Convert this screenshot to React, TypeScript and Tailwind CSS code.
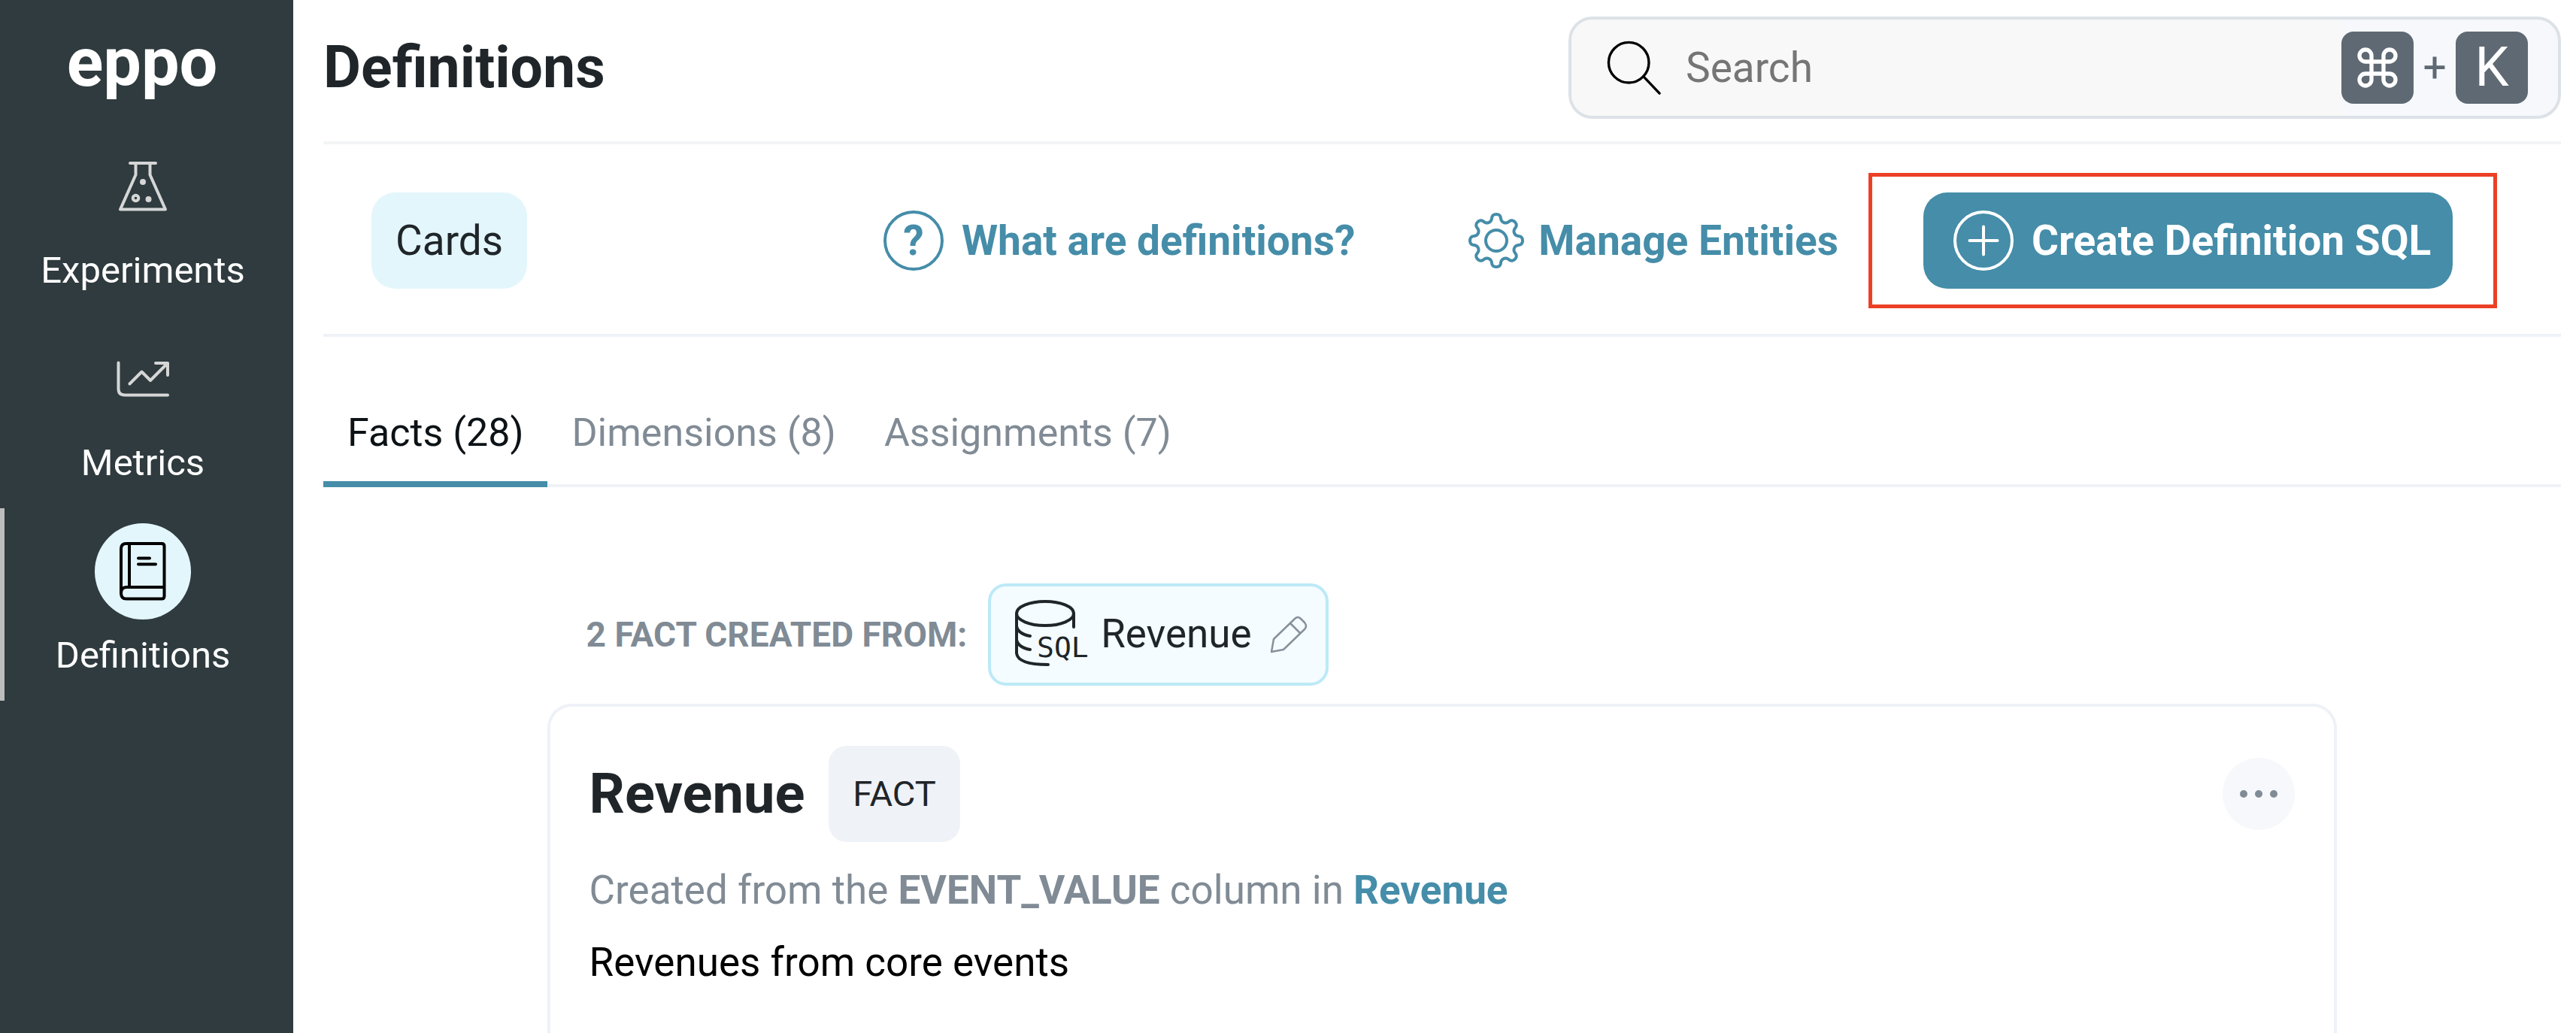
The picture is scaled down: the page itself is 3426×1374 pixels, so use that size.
import type { ReactNode } from "react";
import { Command } from "lucide-react";

function FlaskIcon() {
  return (
    <svg width="68" height="68" viewBox="0 0 68 68" fill="none" stroke="#d6d6d6" strokeWidth="4" strokeLinecap="round" strokeLinejoin="round" aria-hidden="true">
      <path d="M17 3H51M24.500 4V18.500L4 64.500H64L43.500 18.500V4" />
      <circle cx="24.500" cy="49.500" r="3.800" />
      <circle cx="34" cy="28" r="4" fill="#d6d6d6" stroke="none" />
      <circle cx="41.500" cy="51" r="4" fill="#d6d6d6" stroke="none" />
    </svg>
  );
}

function TrendIcon() {
  return (
    <svg width="72" height="48" viewBox="0 0 72 48" fill="none" stroke="#d6d6d6" strokeWidth="4" strokeLinecap="round" strokeLinejoin="round" aria-hidden="true">
      <path d="M3.500 2.500V37Q3.500 45.500 12 45.500H69" />
      <path d="M18.500 30.500L34.500 14.500L46 26L69 3M53 3H69V19" />
    </svg>
  );
}

function BookIcon() {
  return (
    <svg width="64" height="80" viewBox="0 0 64 80" fill="none" stroke="#000" strokeWidth="4" strokeLinecap="round" strokeLinejoin="round" aria-hidden="true">
      <path d="M3 69V10Q3 3 10 3H57Q60.500 3 60.500 6.500V73Q60.500 76.500 57 76.500H10Q3 76.500 3 69Q3 61 10 61H60" />
      <path d="M14 3V61M26 22.500H41M26 30.500H49" />
    </svg>
  );
}

function SearchIcon() {
  return (
    <svg className="shrink-0" width="74" height="74" viewBox="0 0 76 76" fill="none" stroke="#000" strokeWidth="3.500" strokeLinecap="round" aria-hidden="true">
      <circle cx="31" cy="31" r="27.500" />
      <path d="M51 50L73 73" />
    </svg>
  );
}

/* Eight rounded teeth: the radius follows a cosine, and the angle is eased so tips and valleys stay broad. */
function GearIcon() {
  const steps = Array.from({ length: 240 }, (_, i) => {
    const t = (i / 240) * Math.PI * 2;
    const a = t + 0.035 * Math.sin(16 * t);
    const r = 30.5 + 4.5 * Math.cos(8 * t);
    return `${(40 + r * Math.sin(a)).toFixed(2)} ${(40 - r * Math.cos(a)).toFixed(2)}`;
  });
  return (
    <svg className="shrink-0" width="80" height="80" viewBox="0 0 80 80" fill="none" stroke="#458da9" strokeWidth="4" strokeLinejoin="round" aria-hidden="true">
      <path d={`M${steps.join("L")}Z`} />
      <circle cx="40" cy="40" r="14" />
    </svg>
  );
}

function PlusCircleIcon() {
  return (
    <svg className="shrink-0" width="80" height="80" viewBox="0 0 80 80" fill="none" stroke="#fff" strokeWidth="4" strokeLinecap="round" aria-hidden="true">
      <circle cx="40" cy="40" r="38" />
      <path d="M40 21.500V58.500M21.500 40H58.500" />
    </svg>
  );
}

function SqlIcon() {
  return (
    <svg className="shrink-0" width="98" height="92" viewBox="0 0 98 92" fill="none" stroke="#1f2529" strokeWidth="4" strokeLinecap="round" aria-hidden="true">
      <ellipse cx="40" cy="18" rx="38" ry="16" />
      <path d="M2 18V71Q4 86 44 86M78 18V36M2 35Q4 45 20 48M2 53Q4 63 20 66" />
      <text x="29" y="76" fontSize="38" fontFamily="DejaVu Sans Mono" fill="#1f2529" stroke="none">SQL</text>
    </svg>
  );
}

function PencilIcon() {
  return (
    <svg className="shrink-0" width="50" height="50" viewBox="0 0 50 50" fill="none" stroke="#87919b" strokeWidth="2.500" strokeLinejoin="round" aria-hidden="true">
      <path d="M2 48L5 31L33 4Q37 0 41 4L46 9Q50 14 46 18L18 45ZM27 10L40 23" />
    </svg>
  );
}

function NavItem({ label, icon, active }: { label: string; icon: ReactNode; active?: boolean }) {
  return (
    <a
      href="#"
      aria-current={active ? "page" : undefined}
      className={`flex h-64 flex-col items-center border-l-6 pt-5 pr-5 pl-1 text-white ${active ? "border-[#bdbdbd]" : "border-transparent"}`}
    >
      <span className={`flex size-32 items-center justify-center rounded-full ${active ? "bg-[#e3f6fc]" : ""}`}>{icon}</span>
      <span className="mt-4 text-[49px] leading-16">{label}</span>
    </a>
  );
}

function Tab({ label, active }: { label: string; active?: boolean }) {
  return (
    <button
      type="button"
      role="tab"
      aria-selected={!!active}
      className={`-mb-1 border-b-8 px-8 pt-8 pb-7 text-[52px] leading-18 ${active ? "border-[#458da9] text-[#0c1216]" : "border-transparent text-[#808b95]"}`}
    >
      {label}
    </button>
  );
}

function Key({ children }: { children: ReactNode }) {
  return (
    <kbd className="flex size-24 items-center justify-center rounded-2xl bg-[#5e6973] font-['Roboto',sans-serif] text-[72px] leading-none text-white">
      {children}
    </kbd>
  );
}

export default function App() {
  return (
    <div className="flex h-screen overflow-hidden bg-white font-['Roboto',sans-serif] text-[#1f2529]">
      <aside className="w-[390px] shrink-0 bg-[#2f3b3e]">
        <div className="flex h-41 justify-center pt-9 pr-3 text-[90px] leading-24 font-bold text-white">eppo</div>
        <nav>
          <NavItem label="Experiments" icon={<FlaskIcon />} />
          <NavItem label="Metrics" icon={<TrendIcon />} />
          <NavItem label="Definitions" icon={<BookIcon />} active />
        </nav>
      </aside>

      <main className="flex min-w-0 flex-1 flex-col pr-5 pl-10">
        <header className="flex h-48 shrink-0 items-center justify-between border-b-4 border-[#f3f4f5] pb-2">
          <h1 className="text-[77px] leading-24 font-bold">Definitions</h1>
          <div className="flex h-34 w-[1320px] items-center overflow-hidden rounded-[32px] border-4 border-[#dce2e7] bg-[#f6f8fb]">
            <label className="flex h-full flex-1 items-center gap-8 bg-[#f8f8f8] pl-[46px]">
              <SearchIcon />
              <input type="search" aria-label="Search" placeholder="Search" className="min-w-0 flex-1 bg-transparent text-[55px] leading-18 outline-none placeholder:text-[#757575]" />
            </label>
            <div className="flex items-center pr-10">
              <Key><Command size={64} strokeWidth={2} /></Key>
              <span className="w-14 text-center text-[55px] leading-none text-[#5e6973]">+</span>
              <Key>K</Key>
            </div>
          </div>
        </header>

        <div className="flex h-64 shrink-0 items-center border-b-4 border-[#eef2f7] pt-1 pr-[85px] pl-16">
          <button type="button" className="h-32 rounded-[32px] bg-[#e3f6fc] px-8 text-[55px]">Cards</button>
          <div className="ml-auto flex items-center text-[55px] font-bold text-[#458da9]">
            <a href="#" className="flex items-center gap-6">
              <span className="flex size-20 items-center justify-center rounded-full border-4 border-[#458da9] leading-none">?</span>
              What are definitions?
            </a>
            <a href="#" className="ml-[148px] flex items-center gap-4">
              <GearIcon />
              Manage Entities
            </a>
            <div className="ml-10 flex h-[180px] items-center border-5 border-[#ec4026] pr-[54px] pl-[68px]">
              <button type="button" className="flex h-32 w-[704px] items-center gap-6 rounded-[32px] bg-[#458da9] pl-10 whitespace-nowrap text-white">
                <PlusCircleIcon />
                Create Definition SQL
              </button>
            </div>
          </div>
        </div>

        <div role="tablist" className="flex h-50 shrink-0 items-end border-b-4 border-[#eef2f7]">
          <Tab label="Facts (28)" active />
          <Tab label="Dimensions (8)" />
          <Tab label="Assignments (7)" />
        </div>

        <section className="mx-auto flex w-4/5 flex-1 flex-col pt-32">
          <div className="flex items-center gap-7 pl-13">
            <h2 className="text-[46px] font-bold text-[#808b95]">2 FACT CREATED FROM:</h2>
            <button type="button" className="flex h-34 items-center rounded-3xl border-4 border-[#bce9f7] bg-[#f4fcff] pr-6 pl-8 text-[53px]">
              <SqlIcon />
              <span className="mr-6 ml-4">Revenue</span>
              <PencilIcon />
            </button>
          </div>

          <article className="mt-6 flex-1 rounded-t-[32px] border-4 border-b-0 border-[#eef2f7] px-13 pt-13">
            <div className="flex items-center gap-8">
              <h3 className="text-[74px] leading-24 font-bold">Revenue</h3>
              <span className="flex h-32 items-center rounded-3xl bg-[#eff2f7] px-8 text-[47px]">FACT</span>
              <button type="button" aria-label="More options" className="ml-auto flex size-24 items-center justify-center gap-2.5 rounded-full bg-[#f6f8fb]">
                <span className="size-2.5 rounded-full bg-[#808b95]" />
                <span className="size-2.5 rounded-full bg-[#808b95]" />
                <span className="size-2.5 rounded-full bg-[#808b95]" />
              </button>
            </div>
            <p className="mt-7 text-[53px] leading-18 text-[#808b95]">
              Created from the <b>EVENT_VALUE</b> column in{" "}
              <a href="#" className="font-bold text-[#458da9]">Revenue</a>
            </p>
            <p className="mt-6 text-[53px] leading-18 text-black">Revenues from core events</p>
          </article>
        </section>
      </main>
    </div>
  );
}
